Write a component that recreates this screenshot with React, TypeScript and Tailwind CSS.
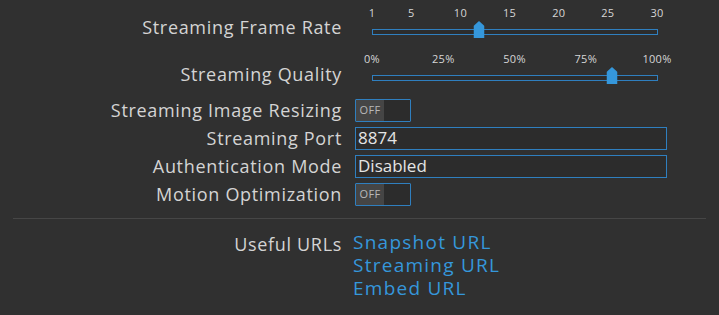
import React from "react";

const font = { fontFamily: '"Open Sans", "DejaVu Sans", sans-serif' };

function Slider({ ticks, pos }: { ticks: { label: string; p: number }[]; pos: number }) {
  return (
    <div className="relative w-[312px] h-[46px]">
      {ticks.map((t) => (
        <span
          key={t.label}
          className="absolute top-[6px] text-[11px] leading-[14px] tracking-[0.3px] text-[#d6d6d6] -translate-x-1/2"
          style={{ left: `${17 + t.p * 285}px` }}
        >
          {t.label}
        </span>
      ))}
      <div className="absolute left-[17px] top-[29px] w-[286px] h-[6px] border border-[#2f7fbf] bg-[#2c2c2c]" />
      <div className="absolute top-[21px] -translate-x-1/2" style={{ left: `${17 + pos * 285}px` }}>
        <svg width="11" height="17" viewBox="0 0 11 17">
          <path d="M0 5 L5.5 0 L11 5 L11 17 L0 17 Z" fill="#3597db" />
        </svg>
      </div>
    </div>
  );
}

function Toggle() {
  return (
    <div className="flex w-[56px] h-[23px] border border-[#2f7fbf] rounded-[1px] bg-[#2c2c2c]">
      <div className="w-[28px] h-full bg-[#454545] flex items-center justify-center text-[11px] tracking-[0.3px] text-[#b8b8b8]">OFF</div>
    </div>
  );
}

function Input({ value }: { value: string }) {
  return (
    <div className="w-[312px] h-[23px] border border-[#2f7fbf] bg-[#2c2c2c] flex items-center pl-[2px] text-[17px] text-[#e4e4e4]">
      {value}
    </div>
  );
}

const label = "w-[342px] shrink-0 text-right text-[18px] leading-[24px] tracking-[0.68px] text-[#d4d4d4]";

export default function App() {
  const fr = [1, 5, 10, 15, 20, 25, 30].map((v) => ({ label: String(v), p: (v - 1) / 29 }));
  const q = [0, 25, 50, 75, 100].map((v) => ({ label: `${v}%`, p: v / 100 }));
  return (
    <div className="w-[719px] h-[315px] bg-[#303030] text-[#d4d4d4] overflow-hidden" style={font}>
      <div className="flex flex-col">
        <div className="flex items-start">
          <div className={`${label} mt-[15px]`}>Streaming Frame Rate</div>
          <div className="ml-[13px]"><Slider ticks={fr} pos={0.374} /></div>
        </div>
        <div className="flex items-start">
          <div className={`${label} mt-[16px]`}>Streaming Quality</div>
          <div className="ml-[13px]"><Slider ticks={q} pos={0.843} /></div>
        </div>
        <div className="flex flex-col gap-[4px] mt-[6px]">
          <div className="flex items-center">
            <div className={label}>Streaming Image Resizing</div>
            <div className="ml-[13px]"><Toggle /></div>
          </div>
          <div className="flex items-center">
            <div className={label}>Streaming Port</div>
            <div className="ml-[13px]"><Input value="8874" /></div>
          </div>
          <div className="flex items-center">
            <div className={label}>Authentication Mode</div>
            <div className="ml-[13px]"><Input value="Disabled" /></div>
          </div>
          <div className="flex items-center">
            <div className={label}>Motion Optimization</div>
            <div className="ml-[13px]"><Toggle /></div>
          </div>
        </div>
        <div className="mx-[13px] mt-[12px] h-px bg-[#464646]" />
        <div className="flex items-start mt-[12px]">
          <div className={`${label} mt-[1px]`}>Useful URLs</div>
          <div className="ml-[11px] flex flex-col text-[19px] leading-[23px] tracking-[1.25px] text-[#3597db]">
            <span>Snapshot URL</span>
            <span>Streaming URL</span>
            <span>Embed URL</span>
          </div>
        </div>
      </div>
    </div>
  );
}
